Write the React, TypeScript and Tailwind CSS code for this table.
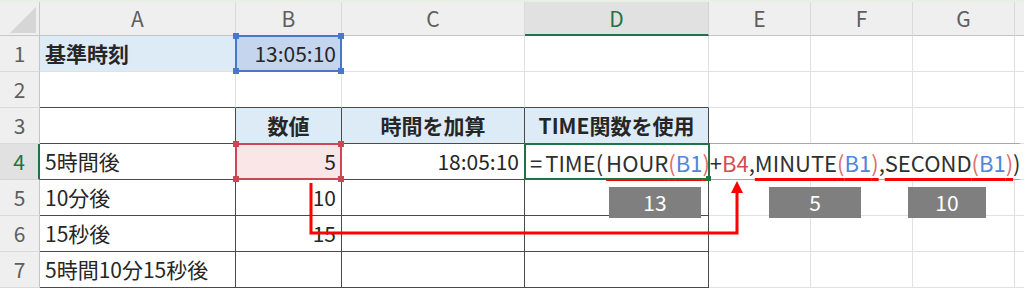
import React from "react";

const cols = ["A", "B", "C", "D", "E", "F", "G", ""];

type Cell = {
  text?: string;
  align?: "left" | "right" | "center";
  bold?: boolean;
  bg?: string;
};

const head = "bg-[#ddebf7]";

const data: Record<number, Record<number, Cell>> = {
  1: {
    1: { text: "基準時刻", bold: true, bg: head },
    2: { text: "13:05:10", align: "right", bg: "bg-[#c6d5ee]" },
  },
  3: {
    2: { text: "数値", bold: true, align: "center", bg: head },
    3: { text: "時間を加算", bold: true, align: "center", bg: head },
    4: { text: "TIME関数を使用", bold: true, align: "center", bg: head },
  },
  4: {
    1: { text: "5時間後" },
    2: { text: "5", align: "right", bg: "bg-[#fae6e7]" },
    3: { text: "18:05:10", align: "right" },
  },
  5: { 1: { text: "10分後" }, 2: { text: "10", align: "right" } },
  6: { 1: { text: "15秒後" }, 2: { text: "15", align: "right" } },
  7: { 1: { text: "5時間10分15秒後" } },
};

// cells inside the bordered table (rows 3-7, columns A-D)
const inTable = (r: number, c: number) => r >= 3 && r <= 7 && c >= 1 && c <= 4;

function Handles({ color }: { color: string }) {
  return (
    <>
      <span className={`absolute -left-[4px] -top-[4px] w-[6px] h-[6px] ${color}`} />
      <span className={`absolute -right-[4px] -top-[4px] w-[6px] h-[6px] ${color}`} />
      <span className={`absolute -left-[4px] -bottom-[4px] w-[6px] h-[6px] ${color}`} />
      <span className={`absolute -right-[4px] -bottom-[4px] w-[6px] h-[6px] ${color}`} />
    </>
  );
}

const pink = "text-[#e36d6d]";
const blue = "text-[#4f86d9]";
const ul = "underline decoration-[#ff0000] decoration-[3px] underline-offset-[6px]";

function FormulaEditor() {
  return (
    <>
      <div className="absolute -left-px -top-px z-20 flex h-[37px] w-[496px] items-center border-y border-[#a8a8a8] bg-white pl-[6px] text-[22px] leading-none text-[#303030] whitespace-nowrap">
        <span className="mr-[3px]">=</span>
        <span className="mr-[3px]">TIME(</span>
        <span className={ul}>
          HOUR<span className={pink}>(</span>
          <span className={blue}>B1</span>
          <span className={pink}>)</span>
        </span>
        <span>+</span>
        <span className="text-[#d24f4f]">B4</span>
        <span>,</span>
        <span className={ul}>
          MINUTE<span className={pink}>(</span>
          <span className={blue}>B1</span>
          <span className={pink}>)</span>
        </span>
        <span>,</span>
        <span className={ul}>
          SECOND<span className={pink}>(</span>
          <span className={blue}>B1</span>
          <span className={pink}>)</span>
        </span>
        <span>)</span>
        <span className="ml-[4px] inline-block h-[29px] w-[2px] bg-[#3a3a3a]" />
      </div>
      <div className="absolute -left-px -top-px z-20 h-[37px] w-[186px] border-2 border-[#217346]">
        <span className="absolute -right-[3px] -bottom-[3px] h-[5px] w-[5px] bg-[#217346]" />
      </div>
    </>
  );
}

function Badge({ value, className }: { value: string; className: string }) {
  return (
    <div
      className={`absolute top-[187px] z-30 flex h-[31px] items-center justify-center bg-[#7f7f7f] text-[21px] leading-none text-white ${className}`}
    >
      {value}
    </div>
  );
}

export default function App() {
  const rows = [1, 2, 3, 4, 5, 6, 7];

  return (
    <div
      className="relative h-[289px] w-[1024px] overflow-hidden bg-white"
      style={{ fontFamily: '"Noto Sans CJK JP", "Noto Sans", sans-serif' }}
    >
      <div className="h-[2px] bg-[#e8f0e3]" />
      <div className="grid grid-cols-[40px_196px_106px_183px_184px_102px_102px_102px_1fr] grid-rows-[34px_repeat(7,36px)]">
        {/* column headers */}
        <div className="relative border-r border-b border-[#c8c8c8] bg-[#efefef]">
          <svg className="absolute right-[3px] bottom-[2px]" width="26" height="26" viewBox="0 0 26 26">
            <polygon points="26,0 26,26 0,26" fill="#d6d6d6" />
          </svg>
        </div>
        {cols.map((c, i) => (
          <div
            key={`h-${i}`}
            className={`flex items-center justify-center text-[21px] leading-none ${
              c === "D"
                ? "border-r border-b-2 border-r-[#d4d4d4] border-b-[#217346] bg-[#e1e1e1] text-[#217346]"
                : "border-r border-b border-r-[#dadada] border-b-[#c4c4c4] bg-[#efefef] text-[#5e5e5e]"
            }`}
          >
            {c}
          </div>
        ))}

        {rows.map((r) => (
          <React.Fragment key={r}>
            <div
              className={`flex items-center justify-center text-[21px] leading-none ${
                r === 4
                  ? "border-r-2 border-b border-r-[#217346] border-b-[#d4d4d4] bg-[#e1e1e1] text-[#217346]"
                  : "border-r border-b border-r-[#c4c4c4] border-b-[#dadada] bg-[#efefef] text-[#5e5e5e]"
              }`}
            >
              {r}
            </div>
            {cols.map((_, ci) => {
              const c = ci + 1;
              const cell = data[r]?.[c] ?? {};
              const table = inTable(r, c);
              const rightDark = table;
              const bottomDark = table || (r === 2 && c >= 1 && c <= 4);
              const justify =
                cell.align === "right"
                  ? "justify-end"
                  : cell.align === "center"
                  ? "justify-center"
                  : "justify-start";
              return (
                <div
                  key={`${r}-${c}`}
                  className={`relative flex items-center px-[5px] border-r border-b text-[21px] leading-none whitespace-nowrap text-[#262626] ${
                    rightDark ? "border-r-[#4a4a4a]" : "border-r-[#e1e1e1]"
                  } ${bottomDark ? "border-b-[#4a4a4a]" : "border-b-[#e1e1e1]"} ${cell.bg ?? "bg-white"} ${justify} ${
                    cell.bold ? "font-bold text-[#111]" : ""
                  }`}
                >
                  {cell.text}
                  {r === 1 && c === 2 && (
                    <div className="absolute -left-px -top-px -right-px -bottom-px z-10 border-2 border-[#4a78c8]">
                      <Handles color="bg-[#4a78c8]" />
                    </div>
                  )}
                  {r === 4 && c === 2 && (
                    <div className="absolute -left-px -top-px -right-px -bottom-px z-10 border-2 border-[#cc4654]">
                      <Handles color="bg-[#cc4654]" />
                    </div>
                  )}
                  {r === 4 && c === 4 && <FormulaEditor />}
                </div>
              );
            })}
          </React.Fragment>
        ))}
      </div>

      {/* results of HOUR / MINUTE / SECOND */}
      <Badge value="13" className="left-[609px] w-[92px]" />
      <Badge value="5" className="left-[769px] w-[92px]" />
      <Badge value="10" className="left-[908px] w-[78px]" />

      {/* arrow from B4 to its place in the formula */}
      <svg className="pointer-events-none absolute left-0 top-0 z-30" width="1024" height="289">
        <polyline points="311,183 311,233 737,233 737,191" fill="none" stroke="#ff0000" strokeWidth="3" />
        <polygon points="737,181 731,193 743,193" fill="#ff0000" />
      </svg>
    </div>
  );
}
